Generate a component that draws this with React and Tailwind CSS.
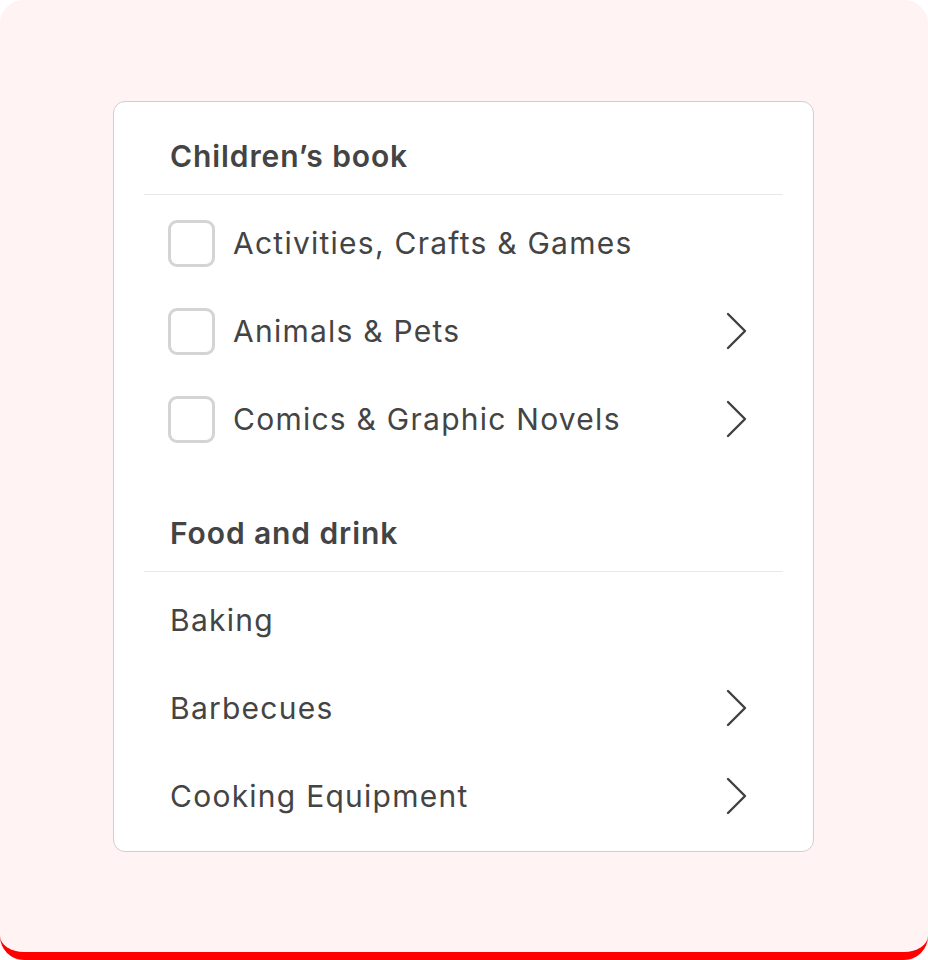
const sections = [
  {
    title: 'Children\u2019s book',
    checkbox: true,
    items: [
      { label: 'Activities, Crafts & Games', more: false },
      { label: 'Animals & Pets', more: true },
      { label: 'Comics & Graphic Novels', more: true },
    ],
  },
  {
    title: 'Food and drink',
    checkbox: false,
    items: [
      { label: 'Baking', more: false },
      { label: 'Barbecues', more: true },
      { label: 'Cooking Equipment', more: true },
    ],
  },
];

function Chevron() {
  return (
    <svg width="24" height="40" viewBox="0 0 24 40" fill="none" className="shrink-0">
      <polyline
        points="3,3 20,20 3,37"
        stroke="#404040"
        strokeWidth="2.4"
        strokeLinecap="round"
        strokeLinejoin="round"
      />
    </svg>
  );
}

export default function App() {
  return (
    <div
      className="w-[928px] h-[960px] bg-[#fff4f3] rounded-[24px] border-b-[8px] border-[#ff0000] pt-[101px]"
      style={{ fontFamily: 'Inter, "Noto Sans", sans-serif' }}
    >
      <div className="ml-[113px] w-[701px] bg-white border-[1.5px] border-[#cfcfcf] rounded-[12px] pt-[17px] pb-[11px] px-[30px] flex flex-col gap-[33px]">
        {sections.map((s) => (
          <div key={s.title}>
            <div className="h-[76px] flex items-center pl-[26px] border-b-[1.5px] border-[#e8e8e8]">
              <span className="text-[30px] font-semibold tracking-[0.9px] text-[#444444]">{s.title}</span>
            </div>
            <div className="pt-[4px]">
              {s.items.map((it) => (
                <div
                  key={it.label}
                  className={`h-[88px] flex items-center pr-[34px] ${s.checkbox ? 'pl-[24px]' : 'pl-[26px]'}`}
                >
                  {s.checkbox && (
                    <span className="w-[47px] h-[47px] rounded-[9px] border-[3px] border-[#d4d4d4] mr-[18px] shrink-0" />
                  )}
                  <span className="flex-1 text-[30px] tracking-[1.25px] text-[#444444]">{it.label}</span>
                  {it.more && <Chevron />}
                </div>
              ))}
            </div>
          </div>
        ))}
      </div>
    </div>
  );
}
